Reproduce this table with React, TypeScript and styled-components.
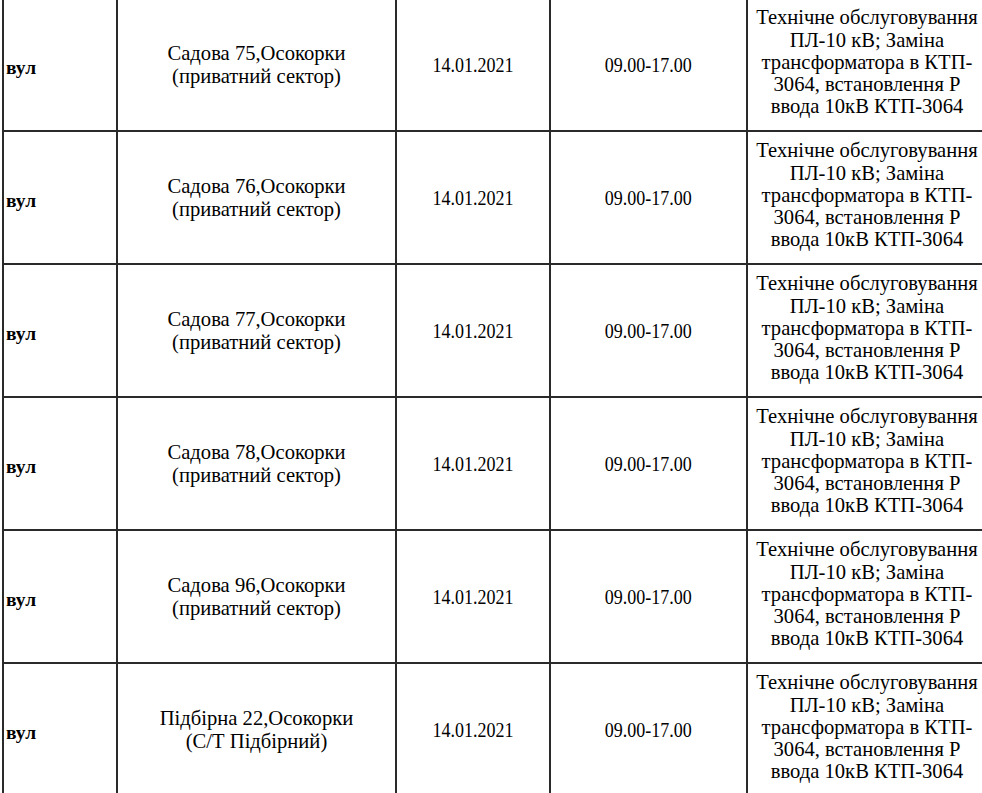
import styled, { createGlobalStyle } from "styled-components";

const GlobalStyle = createGlobalStyle`
  html, body {
    margin: 0;
    padding: 0;
    background: #fff;
    overflow: hidden;
  }
  body {
    font-family: "Liberation Serif", "Times New Roman", serif;
    color: #000;
  }
`;

interface IRow {
  street: string;
  place: string;
}

const rows: IRow[] = [
  { street: "Садова 75,Осокорки", place: "(приватний сектор)" },
  { street: "Садова 76,Осокорки", place: "(приватний сектор)" },
  { street: "Садова 77,Осокорки", place: "(приватний сектор)" },
  { street: "Садова 78,Осокорки", place: "(приватний сектор)" },
  { street: "Садова 96,Осокорки", place: "(приватний сектор)" },
  { street: "Підбірна 22,Осокорки", place: "(С/Т Підбірний)" },
];

const workLines = [
  "Технічне обслуговування",
  "ПЛ-10 кВ; Заміна",
  "трансформатора в КТП-",
  "3064, встановлення Р",
  "ввода 10кВ КТП-3064",
];

const colWidths = [114, 279, 154, 197, 240];

const App = () => {
  return (
    <>
      <GlobalStyle />
      <Sheet>
        <colgroup>
          {colWidths.map((w, i) => (
            <col key={i} style={{ width: w }} />
          ))}
        </colgroup>
        <tbody>
          {rows.map((row, i) => (
            <Row key={i}>
              <Cell $align="left">
                <Kind>вул</Kind>
              </Cell>
              <Cell>
                <Line>{row.street}</Line>
                <Line>{row.place}</Line>
              </Cell>
              <Cell>
                <Narrow>14.01.2021</Narrow>
              </Cell>
              <Cell>
                <Narrow>09.00-17.00</Narrow>
              </Cell>
              <Cell $lift>
                {workLines.map((l) => (
                  <Line key={l}>{l}</Line>
                ))}
              </Cell>
            </Row>
          ))}
        </tbody>
      </Sheet>
    </>
  );
};

export default App;

const Sheet = styled.table`
  table-layout: fixed;
  border-collapse: collapse;
  width: 984px;
  margin: -3px 0 0 2px;
  font-family: "Liberation Serif", "Times New Roman", serif;
  color: #000;
`;

const Row = styled.tr`
  height: 133px;
`;

const Cell = styled.td<{ $align?: "left" | "center"; $lift?: boolean }>`
  border: 2px solid #2a2a2a;
  padding: 0 2px ${({ $lift }) => ($lift ? "5px" : "0")};
  font-family: "Liberation Serif", "Times New Roman", serif;
  font-size: 20.6px;
  line-height: 22.3px;
  text-align: ${({ $align }) => $align ?? "center"};
  vertical-align: middle;
  white-space: nowrap;
  overflow: hidden;
`;

const Kind = styled.span`
  display: inline-block;
  padding-top: 8px;
  font-size: 19.5px;
  font-weight: bold;
`;

const Narrow = styled.span`
  display: inline-block;
  font-size: 20px;
  transform: scaleX(0.9);
  padding-top: 2px;
`;

const Line = styled.div`
  white-space: nowrap;
`;
